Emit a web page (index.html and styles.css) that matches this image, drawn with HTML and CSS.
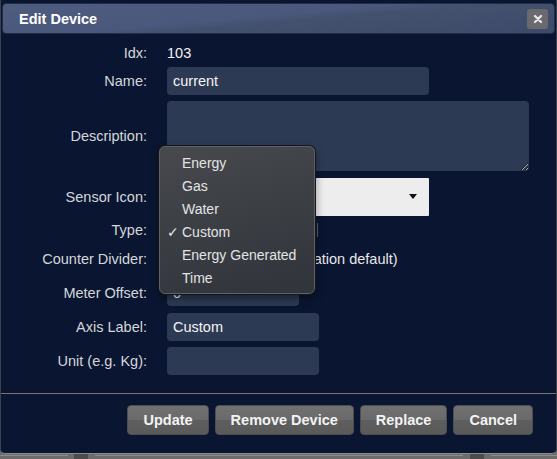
FILE: index.html
```html
<!DOCTYPE html>
<html>
<head>
<meta charset="utf-8">
<link rel="stylesheet" href="styles.css">
</head>
<body>
<div class="dialog">
  <div class="titlebar">
    <span class="title">Edit Device</span>
    <button class="close" aria-label="close">
      <svg width="10" height="10" viewBox="0 0 10 10"><path d="M2 2 L8 8 M8 2 L2 8" stroke="#e6e6e6" stroke-width="2.4" stroke-linecap="round"/></svg>
    </button>
  </div>
  <div class="form">
    <div class="lbl">Idx:</div>
    <div class="val">103</div>

    <div class="lbl">Name:</div>
    <div class="val"><input class="field w-name" value="current"></div>

    <div class="lbl">Description:</div>
    <div class="val"><textarea class="field area"></textarea></div>

    <div class="lbl">Sensor Icon:</div>
    <div class="val"><div class="select-light"><span class="arrow"></span></div></div>

    <div class="lbl">Type:</div>
    <div class="val"><div class="type-select"></div></div>

    <div class="lbl">Counter Divider:</div>
    <div class="val row-inline"><input class="field w-div" value="0"><span class="note">(0 = use application default)</span></div>

    <div class="lbl">Meter Offset:</div>
    <div class="val"><input class="field w-offset" value="0"></div>

    <div class="lbl">Axis Label:</div>
    <div class="val"><input class="field w-short" value="Custom"></div>

    <div class="lbl">Unit (e.g. Kg):</div>
    <div class="val"><input class="field w-short" value=""></div>
  </div>
  <div class="sep"></div>
  <div class="buttons">
    <button class="btn">Update</button>
    <button class="btn">Remove Device</button>
    <button class="btn">Replace</button>
    <button class="btn">Cancel</button>
  </div>
</div>
<div class="behind">
  <span class="b-line b1"></span>
  <span class="b-sq"></span>
  <span class="b-line b2"></span>
  <span class="b-sq"></span>
  <span class="b-line b3"></span>
</div>

<div class="menu">
  <div class="item">Energy</div>
  <div class="item">Gas</div>
  <div class="item">Water</div>
  <div class="item checked"><span class="check">✓</span>Custom</div>
  <div class="item">Energy Generated</div>
  <div class="item">Time</div>
</div>
</body>
</html>
```

FILE: styles.css
```css
html, body {
  margin: 0;
  padding: 0;
}
body {
  width: 557px;
  height: 459px;
  overflow: hidden;
  background: #6c6c6c;
  font-family: "Liberation Sans", Arial, Helvetica, sans-serif;
  position: relative;
}
.dialog {
  width: 557px;
  height: 454px;
  box-sizing: border-box;
  background: #0a1631;
  border-bottom: 1px solid #8a8a8a;
  border-left: 1px solid #3a4252;
  border-right: 1px solid #3a4252;
  border-radius: 0 0 5px 5px;
  overflow: hidden;
}
.titlebar {
  margin: 3px 1px 0 1px;
  height: 31px;
  box-sizing: border-box;
  border: 1px solid #222c45;
  border-radius: 4px;
  background: linear-gradient(175deg, #4e5c7e 0%, #49587c 45%, #43516f 55%, #3d4a69 100%);
  display: flex;
  align-items: center;
  justify-content: space-between;
  padding: 0 6px 0 16px;
}
.title {
  color: #ffffff;
  font-weight: bold;
  font-size: 14.5px;
}
.close {
  width: 21px;
  height: 20px;
  padding: 0;
  border: none;
  border-radius: 3px;
  background: #696a6d;
  display: flex;
  align-items: center;
  justify-content: center;
}
.form {
  margin-top: 9px;
  display: grid;
  grid-template-columns: 146px 1fr;
  column-gap: 20px;
  grid-template-rows: 19px 38px 72px 49px 18px 40px 28px 40px 28px;
  align-items: center;
}
.lbl {
  text-align: right;
  color: #d4d6da;
  font-size: 14.5px;
}
.val {
  color: #f2f2f2;
  font-size: 14.5px;
  display: flex;
  align-items: center;
}
.field {
  box-sizing: border-box;
  border: none;
  outline: none;
  border-radius: 4px;
  background: #2c3a54;
  color: #f4f4f4;
  font-family: "Liberation Sans", Arial, Helvetica, sans-serif;
  font-size: 14.5px;
  padding: 0 6px;
  margin: 0;
}
.w-name { width: 262px; height: 28px; }
.area {
  width: 362px;
  height: 70px;
  resize: both;
  display: block;
}
.w-div { width: 46px; height: 22px; margin-right: 6px; }
.w-offset { width: 132px; height: 26px; }
.w-short { width: 152px; height: 28px; }
.select-light {
  width: 262px;
  height: 38px;
  box-sizing: border-box;
  background: #ededed;
  border-radius: 1px;
  position: relative;
  display: flex;
  align-items: center;
  justify-content: flex-end;
  padding-right: 12px;
}
.arrow {
  width: 0;
  height: 0;
  border-left: 4px solid transparent;
  border-right: 4px solid transparent;
  border-top: 5px solid #111;
}
.type-select {
  width: 150px;
  height: 14px;
  border-right: 1px solid #5a5e66;
}
.row-inline { white-space: nowrap; }
.note {
  color: #e8e8e8;
  font-size: 14.5px;
}
.sep {
  margin-top: 18px;
  height: 1px;
  background: #77736d;
}
.buttons {
  margin-top: 11px;
  display: flex;
  justify-content: flex-end;
  gap: 6px;
  padding-right: 23px;
}
.btn {
  height: 30px;
  padding: 0 15px;
  border: 1px solid #4e4e4e;
  border-radius: 4px;
  background: linear-gradient(#717171 0%, #6a6a6a 48%, #5e5e5e 52%, #5a5a5a 100%);
  color: #f3f3f3;
  font-family: "Liberation Sans", Arial, Helvetica, sans-serif;
  font-weight: bold;
  font-size: 14.5px;
}
.behind {
  height: 5px;
  display: flex;
  align-items: flex-start;
}
.b-line {
  height: 1px;
  margin-top: 1px;
  background: #8c8c8c;
  border-radius: 1px;
}
.b1 { width: 68px; margin-right: 6px; }
.b-sq {
  width: 14px;
  height: 5px;
  background: #4c4c4c;
}
.b2 { width: 368px; margin: 1px 7px 0 7px; }
.b3 { flex: 1; margin-left: 7px; }
.menu {
  position: absolute;
  left: 159px;
  top: 146px;
  width: 156px;
  height: 148px;
  box-sizing: border-box;
  border: 1px solid #5e6064;
  border-radius: 6px;
  background: linear-gradient(165deg, #47494d 0%, #3c3f44 45%, #30343b 100%);
  box-shadow: 0 0 0 1px #15171c, 0 4px 10px rgba(0,0,0,0.45);
  padding-top: 5px;
}
.item {
  position: relative;
  height: 23px;
  line-height: 23px;
  padding-left: 22px;
  color: #e4e4e4;
  font-size: 14px;
}
.check {
  position: absolute;
  left: 7px;
  top: 0;
  font-family: "DejaVu Sans", sans-serif;
  font-size: 14px;
}
```
